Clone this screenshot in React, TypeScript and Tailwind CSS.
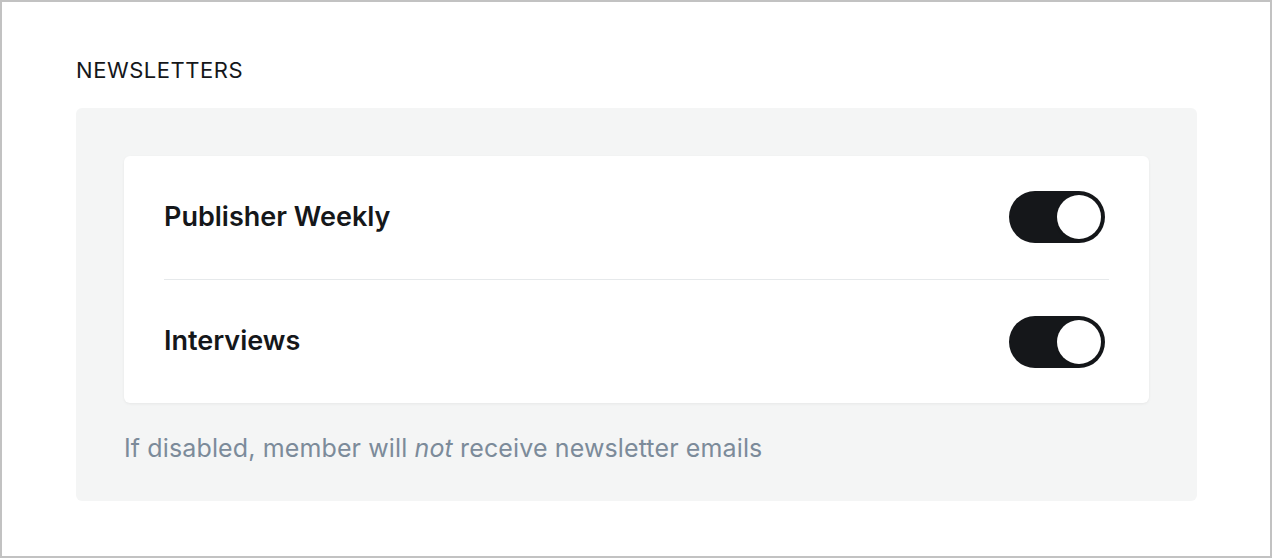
import React, { useState } from "react";

const Toggle = ({ on, onClick }: { on: boolean; onClick: () => void }) => (
  <button
    type="button"
    onClick={onClick}
    className={`relative flex h-[52px] w-[96px] shrink-0 items-center rounded-full p-1 transition ${
      on ? "bg-[#15171a] justify-end" : "bg-[#dfe3e7] justify-start"
    }`}
  >
    <span className="block h-[44px] w-[44px] rounded-full bg-white shadow-[0_2px_3px_rgba(0,0,0,0.12)]" />
  </button>
);

export default function App() {
  const [subs, setSubs] = useState({ weekly: true, interviews: true });

  return (
    <div
      className="h-[558px] w-[1272px] border-2 border-[#c2c2c2] bg-white pl-[74px] pr-[73px] pt-[54px]"
      style={{ fontFamily: "Inter, 'Noto Sans', sans-serif" }}
    >
      <h2 className="text-[22px] leading-[28px] tracking-[0.025em] text-[#15171a]">NEWSLETTERS</h2>

      <div className="mt-[24px] rounded-md bg-[#f4f5f5] px-[48px] pb-[35px] pt-[48px]">
        <div className="rounded-md bg-white px-[40px] shadow-[0_1px_3px_rgba(0,0,0,0.06)]">
          <div className="flex h-[124px] items-center justify-between border-b border-[#e6e9eb] pb-[1px] pr-[4px]">
            <span className="text-[27px] font-semibold text-[#15171a]">Publisher Weekly</span>
            <Toggle on={subs.weekly} onClick={() => setSubs({ ...subs, weekly: !subs.weekly })} />
          </div>
          <div className="flex h-[123px] items-center justify-between pr-[4px]">
            <span className="text-[27px] font-semibold text-[#15171a]">Interviews</span>
            <Toggle on={subs.interviews} onClick={() => setSubs({ ...subs, interviews: !subs.interviews })} />
          </div>
        </div>

        <p className="mt-[27px] text-[25px] leading-[36px] tracking-[0.005em] text-[#7c8b9a]">
          If disabled, member will <em>not</em> receive newsletter emails
        </p>
      </div>
    </div>
  );
}
